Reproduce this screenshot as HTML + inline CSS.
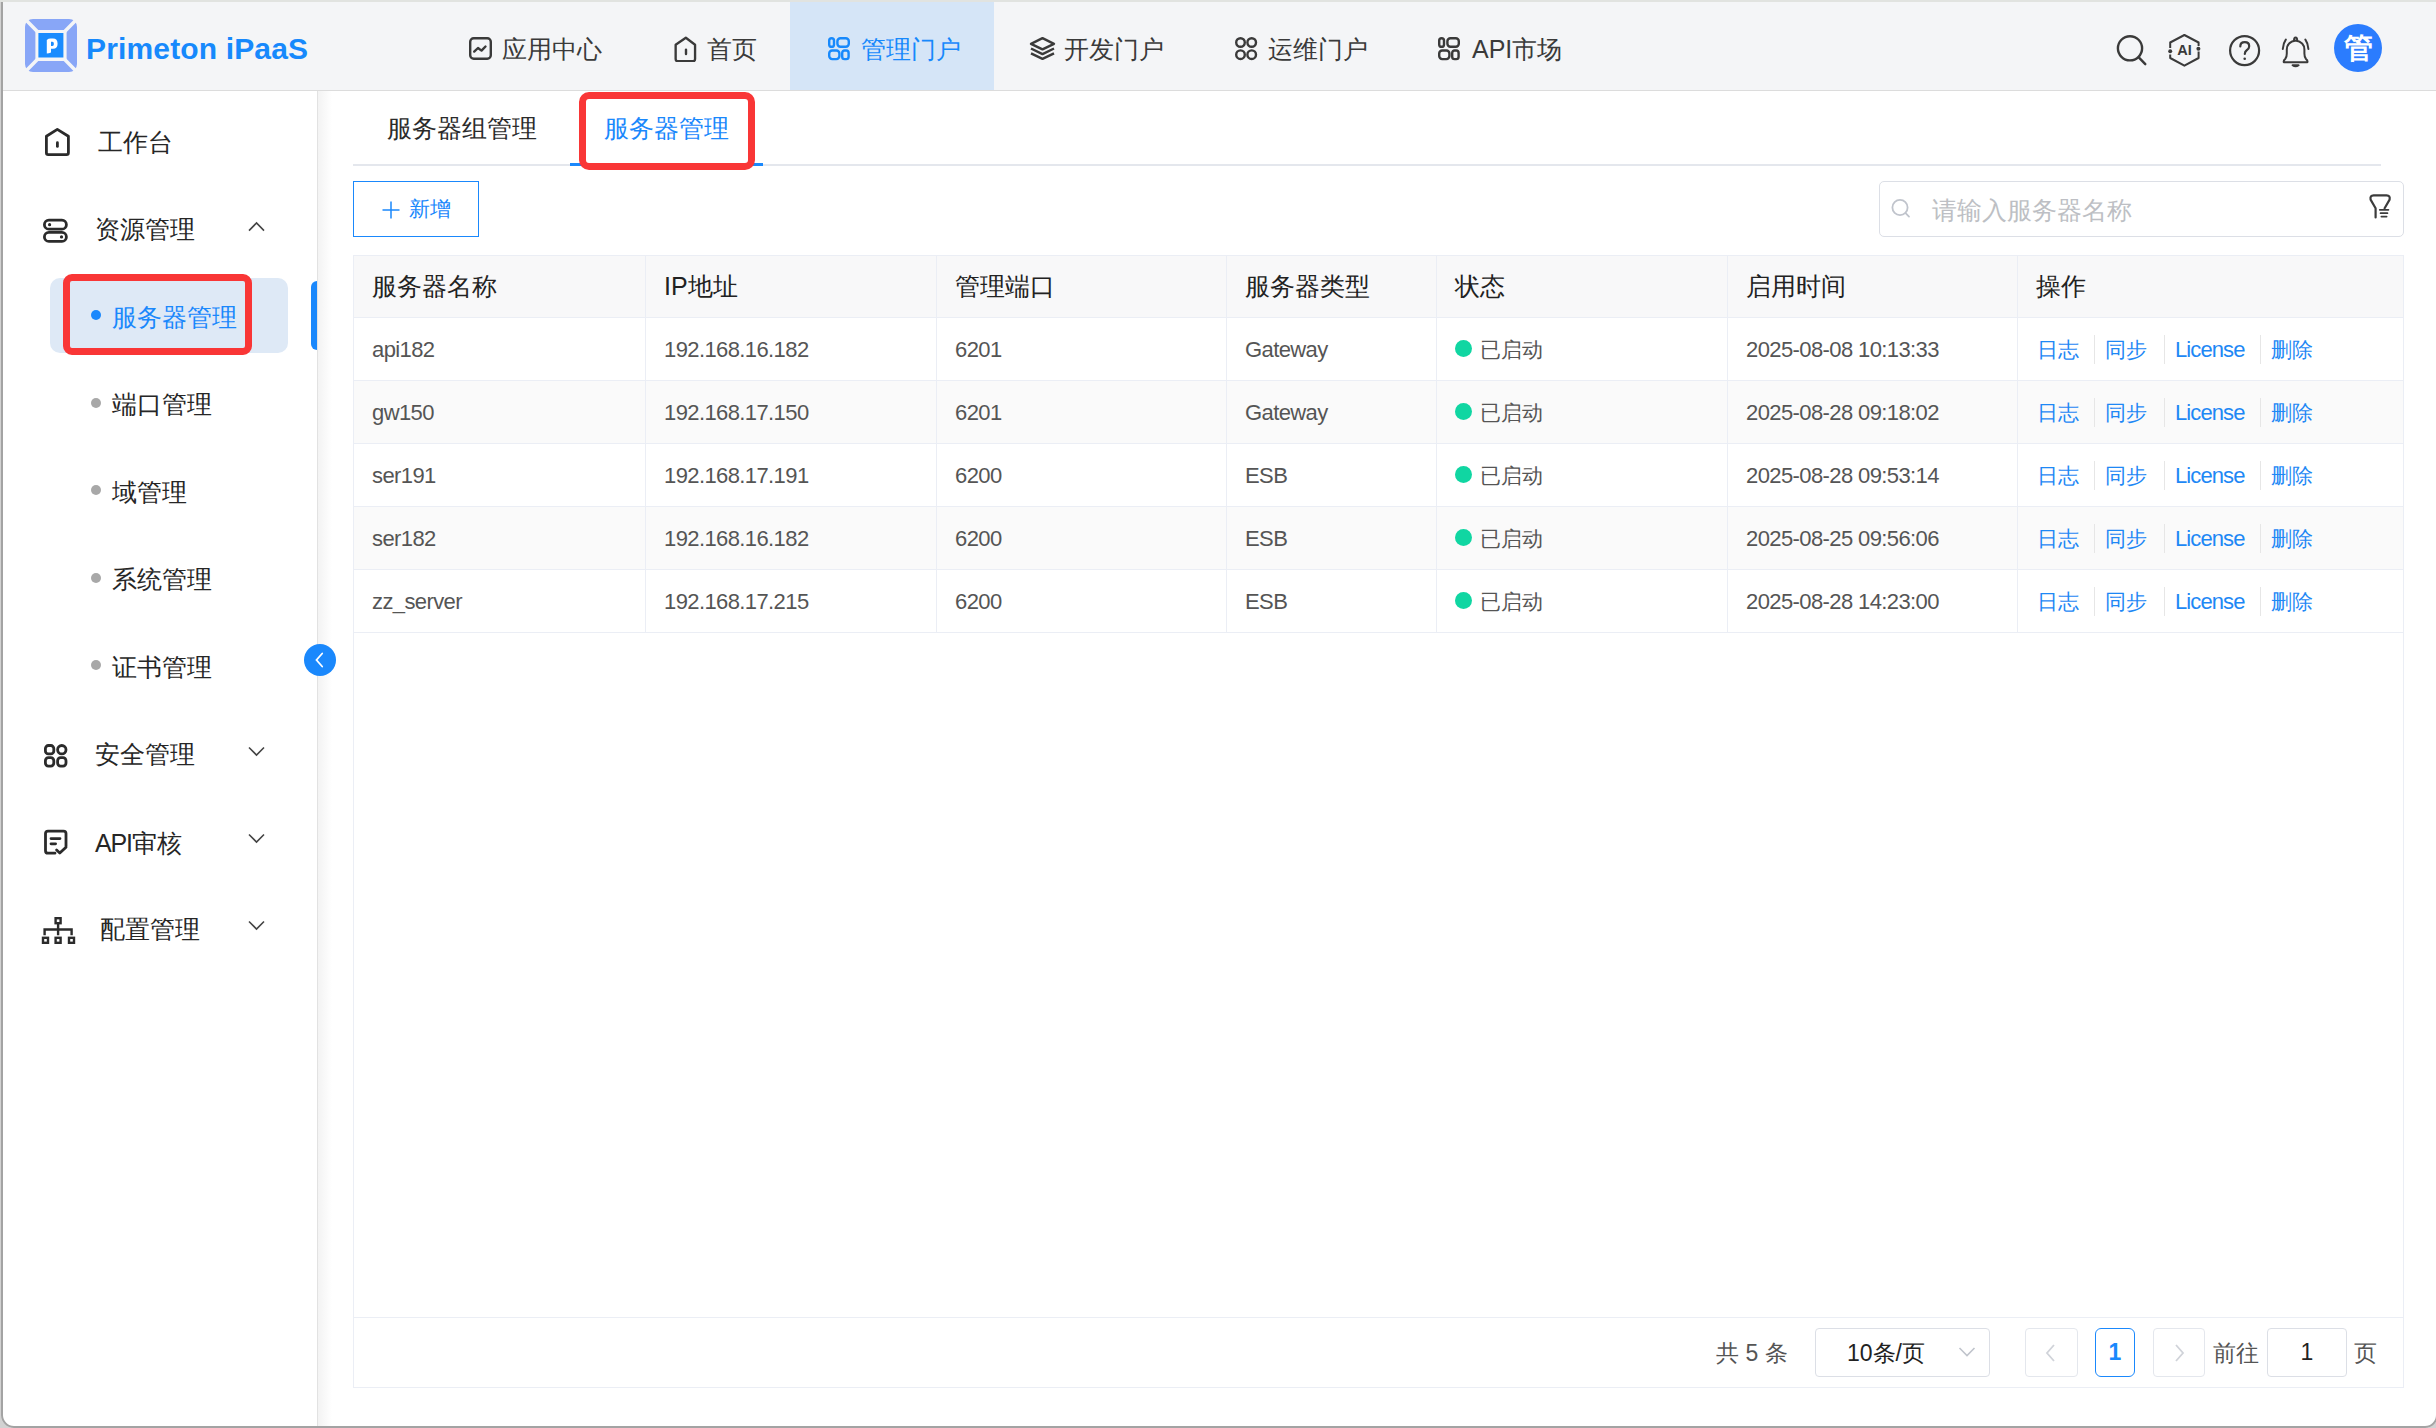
<!DOCTYPE html>
<html><head><meta charset="utf-8">
<style>
*{box-sizing:border-box;margin:0;padding:0}
html,body{width:2436px;height:1428px;overflow:hidden;background:#fff;font-family:"Liberation Sans",sans-serif;color:#303133}
.a{position:absolute}
#win{position:absolute;left:0;top:0;width:2436px;height:1428px;background:#fff}
#topb{position:absolute;left:0;top:0;width:2436px;height:2px;background:#e1e3e0}
#leftb{position:absolute;left:1px;top:0;width:2px;height:1428px;background:#acacac}
#botb{position:absolute;left:0;top:1426px;width:2436px;height:2px;background:#9a9a9a}
#hdr{position:absolute;left:3px;top:2px;width:2433px;height:89px;background:#f4f5f7;border-bottom:1px solid #dcdcdc}
.nav{position:absolute;top:0;height:88px;line-height:94px;font-size:25px;color:#3a3a3a;white-space:nowrap}
.nav svg{position:absolute}
#side{position:absolute;left:3px;top:91px;width:315px;height:1335px;background:#fff;border-right:1px solid #e2e2e2}
.mi{position:absolute;font-size:25px;color:#262626;white-space:nowrap;line-height:30px}
.si{position:absolute;font-size:25px;color:#262626;white-space:nowrap;line-height:30px}
.dot{position:absolute;width:9px;height:9px;border-radius:50%;background:#a8a8a8}
.chev{position:absolute}
.tbl{position:absolute;left:353px;top:255px;width:2051px;height:1063px;border:1px solid #ebeef5;border-right:none}
.row{position:absolute;left:0;width:2050px;height:63px;border-bottom:1px solid #ebeef5}
.cell{position:absolute;top:0;height:62px;line-height:64px;font-size:22px;color:#555;white-space:nowrap;padding-left:18px;letter-spacing:-0.6px}
.vl{position:absolute;top:0;width:1px;height:377px;background:#ebeef5}
.hd{font-size:25px;color:#222;line-height:61px;letter-spacing:0}
.lk{position:absolute;color:#1e88f5;font-size:22px;top:0;line-height:64px}
.sep{position:absolute;top:17px;width:1px;height:29px;background:#e6e6e6}
.gdot{display:inline-block;width:17px;height:17px;border-radius:50%;background:#10d6a2;vertical-align:middle;margin-right:8px;position:relative;top:-3px}
.tab{position:absolute;font-size:25px;line-height:30px;white-space:nowrap}
.pg{position:absolute;top:1338px;font-size:23px;line-height:30px;color:#555;white-space:nowrap}
.cn{font-size:21px;letter-spacing:0}
</style></head><body>
<div id="win">
<div id="hdr">
<svg class="a" style="left:22px;top:17px" width="52" height="53" viewBox="0 0 52 53">
<rect x="0" y="0" width="52" height="53" rx="8" fill="#88a6f7"/>
<path d="M-2 -2 L54 55 M54 -2 L-2 55" stroke="#f4f5f7" stroke-width="3.6"/>
<rect x="10.4" y="11" width="31.2" height="31" fill="#f4f5f7"/>
<rect x="13.4" y="14" width="25" height="24.5" fill="#1a8cfe"/>
<path d="M21.8 21 Q23.5 19.6 25.5 19.6 H28 Q32.6 19.6 32.6 24.8 Q32.6 29.8 28 29.8 H26 V33.6 Q24 34.6 21.8 34.6 Z M26 22.8 V27 H27.4 Q28.9 27 28.9 24.9 Q28.9 22.8 27.4 22.8 Z" fill="#fff"/>
</svg>
<div class="a" style="left:83px;top:27px;font-size:30px;letter-spacing:0.15px;font-weight:bold;color:#1789fc;line-height:40px;white-space:nowrap">Primeton iPaaS</div>
<div class="a" style="left:787px;top:0;width:204px;height:88px;background:#d5e5f7"></div>
<!-- nav 1 -->
<svg class="a" style="left:463px;top:34px" width="26" height="26" viewBox="0 0 26 26" fill="none" stroke="#3a3a3a" stroke-width="2.4" stroke-linejoin="round" stroke-linecap="round"><rect x="4.2" y="2.2" width="20.6" height="20.6" rx="3.5"/><path d="M8.2 15.6 L12 12 L15.5 14.6 L19.5 10.5"/></svg>
<div class="nav" style="left:499px">应用中心</div>
<svg class="a" style="left:667px;top:32px" width="28" height="28" viewBox="0 0 28 28" fill="none" stroke="#3a3a3a" stroke-width="2.4" stroke-linejoin="round" stroke-linecap="round"><path d="M7.2 10.8 L17.6 3.8 L27 10.8 V25 Q27 27.2 25 27.2 H9.2 Q7.2 27.2 7.2 25 Z" transform="translate(-1.4,0) scale(0.98,1)"/><path d="M16 15.8 V20" /></svg>
<div class="nav" style="left:704px">首页</div>
<svg class="a" style="left:822px;top:33px" width="28" height="28" viewBox="0 0 28 28" fill="none" stroke="#1789fc" stroke-width="2.4"><rect x="4.2" y="3.2" width="4.8" height="8.6" rx="2.4"/><rect x="12.4" y="3.2" width="11.4" height="8.6" rx="3"/><rect x="4.2" y="15.5" width="10.2" height="8.6" rx="3"/><rect x="17.2" y="15.5" width="6.4" height="8.6" rx="2.4"/></svg>
<div class="nav" style="left:858px;color:#1789fc">管理门户</div>
<svg class="a" style="left:1024px;top:33px" width="30" height="28" viewBox="0 0 30 28" fill="none" stroke="#3a3a3a" stroke-width="2.4" stroke-linejoin="round"><path d="M15.5 3.2 L27 8.8 L15.5 14.4 L4 8.8 Z"/><path d="M4 13.5 L15.5 19.1 L27 13.5"/><path d="M4 18.3 L15.5 23.9 L27 18.3"/></svg>
<div class="nav" style="left:1061px">开发门户</div>
<svg class="a" style="left:1229px;top:33px" width="28" height="28" viewBox="0 0 28 28" fill="none" stroke="#3a3a3a" stroke-width="2.4"><rect x="4.2" y="3.2" width="8.6" height="8.6" rx="4.3"/><rect x="15.4" y="3.2" width="8.6" height="8.6" rx="4.3"/><rect x="4.2" y="15.4" width="8.6" height="8.6" rx="4.3"/><rect x="15.4" y="15.4" width="8.6" height="8.6" rx="4.3"/></svg>
<div class="nav" style="left:1265px">运维门户</div>
<svg class="a" style="left:1432px;top:33px" width="28" height="28" viewBox="0 0 28 28" fill="none" stroke="#3a3a3a" stroke-width="2.4"><rect x="4.2" y="3.2" width="4.8" height="8.6" rx="2.4"/><rect x="12.4" y="3.2" width="11.4" height="8.6" rx="3"/><rect x="4.2" y="15.5" width="10.2" height="8.6" rx="3"/><rect x="17.2" y="15.5" width="6.4" height="8.6" rx="2.4"/></svg>
<div class="nav" style="left:1469px">API市场</div>
<!-- right icons -->
<svg class="a" style="left:2107px;top:26px" width="42" height="42" viewBox="0 0 42 42" fill="none" stroke="#3a3a3a" stroke-width="2.4" stroke-linecap="round"><circle cx="20" cy="20.3" r="12.1"/><path d="M29 29.6 L35.3 36.2"/></svg>
<svg class="a" style="left:2158px;top:26px" width="46" height="42" viewBox="0 0 46 42" fill="none" stroke="#3a3a3a" stroke-width="2" stroke-linejoin="round"><path d="M9.2 20 V14.5 L23.4 7 L37.6 14.5 V18 M37.6 23.5 V30 L23.4 37.7 L9.2 30 V26.5"/><circle cx="9.2" cy="23.2" r="2" fill="#3a3a3a" stroke="none"/><circle cx="37.4" cy="20.8" r="2" fill="#3a3a3a" stroke="none"/><text x="16.2" y="27.2" font-family="Liberation Sans" font-weight="bold" font-size="14.5" fill="#3a3a3a" stroke="none">AI</text></svg>
<svg class="a" style="left:2221px;top:26px" width="42" height="42" viewBox="0 0 42 42" fill="none" stroke="#3a3a3a" stroke-width="2.2" stroke-linecap="round"><circle cx="20.6" cy="22.6" r="14.5"/><path d="M16.3 18.4 Q16.3 14.2 20.8 14.2 Q25.2 14.2 25.2 18.2 Q25.2 20.6 22.7 22.2 Q20.8 23.4 20.8 26"/><circle cx="20.7" cy="30.8" r="1.3" fill="#3a3a3a" stroke="none"/></svg>
<svg class="a" style="left:2269px;top:26px" width="42" height="42" viewBox="0 0 42 42" fill="none" stroke="#3a3a3a" stroke-width="2" stroke-linecap="round" stroke-linejoin="round"><path d="M11.8 34.2 Q11.3 32.6 13.2 31 Q14.8 29.2 14.8 25.4 V21.6 Q14.8 14.4 23.6 12.6 Q32.4 14.4 32.4 21.6 V25.4 Q32.4 29.2 34 31 Q35.9 32.6 35.4 34.2 Z"/><path d="M22 12.6 Q22 9.6 23.6 9.6 Q25.2 9.6 25.2 12.6"/><path d="M20.6 37.2 Q23.6 39.2 26.6 37.2 Z" fill="#3a3a3a"/><path d="M10.8 21 Q11.3 15 13.8 11.6 M36.4 21 Q35.9 15 33.4 11.6"/></svg>
<div class="a" style="left:2331px;top:22px;width:48px;height:48px;border-radius:50%;background:#2b7cfe;color:#fff;font-size:29px;font-weight:bold;text-align:center;line-height:48px">管</div>
</div>
<div id="side"></div>
<svg class="a" style="left:42px;top:126px" width="30" height="32" viewBox="0 0 30 32" fill="none" stroke="#2b2b2b" stroke-width="2.8" stroke-linejoin="round" stroke-linecap="round"><path d="M4.4 10.2 L15.3 3.4 L26.4 10.2 V26.8 Q26.4 28.6 24.6 28.6 H6.2 Q4.4 28.6 4.4 26.8 Z"/><path d="M15.4 16.7 V20.4"/></svg>
<div class="mi" style="left:98px;top:127px">工作台</div>
<svg class="a" style="left:40px;top:216px" width="32" height="30" viewBox="0 0 32 30" fill="none" stroke="#2b2b2b" stroke-width="2.8" stroke-linejoin="round" stroke-linecap="round"><rect x="4.4" y="4.2" width="22" height="9" rx="4.5"/><rect x="4.4" y="16.4" width="22" height="9" rx="4.5"/><circle cx="9.6" cy="8.7" r="0.9" fill="#2b2b2b" stroke-width="1.4"/><circle cx="21.5" cy="20.9" r="0.9" fill="#2b2b2b" stroke-width="1.4"/></svg>
<div class="mi" style="left:95px;top:214px">资源管理</div>
<svg class="a" style="left:246px;top:219px" width="22" height="14" viewBox="0 0 22 14" fill="none" stroke="#444" stroke-width="1.6"><path d="M3 11.6 L10.5 4 L18 11.6"/></svg>
<div class="a" style="left:50px;top:278px;width:238px;height:75px;border-radius:10px;background:#dee9f6"></div>
<div class="a" style="left:311px;top:281px;width:6px;height:69px;border-radius:6px 0 0 6px;background:#1a88fc"></div>
<div class="dot" style="left:91px;top:310px;background:#1a88fc;width:10px;height:10px"></div>
<div class="si" style="left:112px;top:302px;color:#1a88fc">服务器管理</div>
<div class="a" style="left:63px;top:274px;width:189px;height:81px;border:7px solid #f93636;border-radius:9px"></div>
<div class="dot" style="left:91px;top:398px;width:10px;height:10px"></div>
<div class="si" style="left:112px;top:389px">端口管理</div>
<div class="dot" style="left:91px;top:485px;width:10px;height:10px"></div>
<div class="si" style="left:112px;top:477px">域管理</div>
<div class="dot" style="left:91px;top:573px;width:10px;height:10px"></div>
<div class="si" style="left:112px;top:564px">系统管理</div>
<div class="dot" style="left:91px;top:660px;width:10px;height:10px"></div>
<div class="si" style="left:112px;top:652px">证书管理</div>
<svg class="a" style="left:42px;top:742px" width="28" height="28" viewBox="0 0 28 28" fill="none" stroke="#2b2b2b" stroke-width="2.8" stroke-linejoin="round" stroke-linecap="round"><rect x="3.4" y="3.5" width="8.4" height="8.4" rx="3"/><rect x="15.6" y="3.5" width="8.4" height="8.4" rx="4.2"/><rect x="3.4" y="15.7" width="8.4" height="8.4" rx="3"/><rect x="15.6" y="15.7" width="8.4" height="8.4" rx="3"/></svg>
<div class="mi" style="left:95px;top:739px">安全管理</div>
<svg class="a" style="left:246px;top:744px" width="22" height="14" viewBox="0 0 22 14" fill="none" stroke="#444" stroke-width="1.6"><path d="M3 3.5 L10.5 11 L18 3.5"/></svg>
<svg class="a" style="left:42px;top:828px" width="28" height="30" viewBox="0 0 28 30" fill="none" stroke="#2b2b2b" stroke-width="2.8" stroke-linejoin="round" stroke-linecap="round"><path d="M13 25.2 H6 Q3.5 25.2 3.5 22.7 V5.6 Q3.5 3.1 6 3.1 H21.5 Q24 3.1 24 5.6 V18"/><path d="M9 10.6 H18 M9 15.8 H13.6"/><path d="M14.6 22 L17.8 25 L24 19.2"/></svg>
<div class="mi" style="left:95px;top:828px"><span style="letter-spacing:-1.2px">API</span>审核</div>
<svg class="a" style="left:246px;top:831px" width="22" height="14" viewBox="0 0 22 14" fill="none" stroke="#444" stroke-width="1.6"><path d="M3 3.5 L10.5 11 L18 3.5"/></svg>
<svg class="a" style="left:40px;top:915px" width="36" height="32" viewBox="0 0 36 32" fill="none" stroke="#2b2b2b" stroke-width="2.4"><rect x="15.6" y="3.2" width="5" height="5"/><path d="M18.1 8.2 V14.5 M4.6 20.3 V14.5 H31.6 V20.3 M18.1 14.5 V20.3"/><rect x="3" y="22.8" width="5" height="5"/><rect x="15.6" y="22.8" width="5" height="5"/><rect x="29" y="22.8" width="5" height="5"/></svg>
<div class="mi" style="left:100px;top:914px">配置管理</div>
<svg class="a" style="left:246px;top:918px" width="22" height="14" viewBox="0 0 22 14" fill="none" stroke="#444" stroke-width="1.6"><path d="M3 3.5 L10.5 11 L18 3.5"/></svg>


<div id="main">
<div class="a" style="left:318px;top:91px;width:14px;height:1335px;background:linear-gradient(to right,#f3f3f3,#fff)"></div>
<div class="tab" style="left:387px;top:113px;color:#2b2b2b">服务器组管理</div>
<div class="tab" style="left:604px;top:113px;color:#1a88fc">服务器管理</div>
<div class="a" style="left:353px;top:164px;width:2028px;height:2px;background:#e4e7ed"></div>
<div class="a" style="left:570px;top:163px;width:193px;height:3px;background:#1a88fc"></div>
<div class="a" style="left:579px;top:92px;width:176px;height:78px;border:7px solid #f93636;border-radius:10px"></div>
<div class="a" style="left:353px;top:181px;width:126px;height:56px;border:1.5px solid #1a88fc;color:#1a88fc;font-size:21px;line-height:54px;white-space:nowrap">
<svg class="a" style="left:27px;top:18px" width="20" height="20" viewBox="0 0 20 20" stroke="#1a88fc" stroke-width="1.5"><path d="M10 1.5 V18.5 M1.5 10 H18.5"/></svg>
<span class="a" style="left:55px;top:0">新增</span></div>
<div class="a" style="left:1879px;top:181px;width:525px;height:56px;border:1px solid #dcdfe6;border-radius:5px"></div>
<svg class="a" style="left:1889px;top:197px" width="24" height="24" viewBox="0 0 24 24" fill="none" stroke="#c0c4cc" stroke-width="1.8" stroke-linecap="round"><circle cx="11" cy="10.5" r="7.6"/><path d="M16.6 16.2 L20 19.6"/></svg>
<div class="a" style="left:1932px;top:195px;font-size:25px;line-height:30px;color:#bdbfc4;white-space:nowrap">请输入服务器名称</div>
<svg class="a" style="left:2366px;top:192px" width="28" height="30" viewBox="0 0 28 30" fill="none" stroke="#3c3c3c" stroke-width="2.2" stroke-linecap="round" stroke-linejoin="round"><path d="M9.6 25.4 V16.2 L4.6 7.6 Q3.8 3.4 7.6 3.4 H20.6 Q24.4 3.4 23.6 7.6 L18.6 16.2"/><path d="M13.8 17.8 H22.4 M14.6 21.2 H21.4 M15.4 24.6 H20.6" stroke-width="1.8"/></svg>
<div class="tbl">
<div class="row" style="top:0;height:62px;background:#f8f8f9"><div class="cell hd" style="left:0px">服务器名称</div><div class="cell hd" style="left:292px">IP地址</div><div class="cell hd" style="left:583px">管理端口</div><div class="cell hd" style="left:873px">服务器类型</div><div class="cell hd" style="left:1083px">状态</div><div class="cell hd" style="left:1374px">启用时间</div><div class="cell hd" style="left:1664px">操作</div></div>
<div class="row" style="top:62px;background:#fff"><div class="cell" style="left:0px">api182</div><div class="cell" style="left:292px">192.168.16.182</div><div class="cell" style="left:583px">6201</div><div class="cell" style="left:873px">Gateway</div><div class="cell cn" style="left:1083px"><span class="gdot"></span>已启动</div><div class="cell" style="left:1374px">2025-08-08 10:13:33</div><div class="lk cn" style="left:1683px">日志</div><div class="sep" style="left:1740px"></div><div class="lk cn" style="left:1751px">同步</div><div class="sep" style="left:1810px"></div><div class="lk" style="letter-spacing:-0.9px;left:1821px">License</div><div class="sep" style="left:1906px"></div><div class="lk cn" style="left:1917px">删除</div></div>
<div class="row" style="top:125px;background:#fafafa"><div class="cell" style="left:0px">gw150</div><div class="cell" style="left:292px">192.168.17.150</div><div class="cell" style="left:583px">6201</div><div class="cell" style="left:873px">Gateway</div><div class="cell cn" style="left:1083px"><span class="gdot"></span>已启动</div><div class="cell" style="left:1374px">2025-08-28 09:18:02</div><div class="lk cn" style="left:1683px">日志</div><div class="sep" style="left:1740px"></div><div class="lk cn" style="left:1751px">同步</div><div class="sep" style="left:1810px"></div><div class="lk" style="letter-spacing:-0.9px;left:1821px">License</div><div class="sep" style="left:1906px"></div><div class="lk cn" style="left:1917px">删除</div></div>
<div class="row" style="top:188px;background:#fff"><div class="cell" style="left:0px">ser191</div><div class="cell" style="left:292px">192.168.17.191</div><div class="cell" style="left:583px">6200</div><div class="cell" style="left:873px">ESB</div><div class="cell cn" style="left:1083px"><span class="gdot"></span>已启动</div><div class="cell" style="left:1374px">2025-08-28 09:53:14</div><div class="lk cn" style="left:1683px">日志</div><div class="sep" style="left:1740px"></div><div class="lk cn" style="left:1751px">同步</div><div class="sep" style="left:1810px"></div><div class="lk" style="letter-spacing:-0.9px;left:1821px">License</div><div class="sep" style="left:1906px"></div><div class="lk cn" style="left:1917px">删除</div></div>
<div class="row" style="top:251px;background:#fafafa"><div class="cell" style="left:0px">ser182</div><div class="cell" style="left:292px">192.168.16.182</div><div class="cell" style="left:583px">6200</div><div class="cell" style="left:873px">ESB</div><div class="cell cn" style="left:1083px"><span class="gdot"></span>已启动</div><div class="cell" style="left:1374px">2025-08-25 09:56:06</div><div class="lk cn" style="left:1683px">日志</div><div class="sep" style="left:1740px"></div><div class="lk cn" style="left:1751px">同步</div><div class="sep" style="left:1810px"></div><div class="lk" style="letter-spacing:-0.9px;left:1821px">License</div><div class="sep" style="left:1906px"></div><div class="lk cn" style="left:1917px">删除</div></div>
<div class="row" style="top:314px;background:#fff"><div class="cell" style="left:0px">zz_server</div><div class="cell" style="left:292px">192.168.17.215</div><div class="cell" style="left:583px">6200</div><div class="cell" style="left:873px">ESB</div><div class="cell cn" style="left:1083px"><span class="gdot"></span>已启动</div><div class="cell" style="left:1374px">2025-08-28 14:23:00</div><div class="lk cn" style="left:1683px">日志</div><div class="sep" style="left:1740px"></div><div class="lk cn" style="left:1751px">同步</div><div class="sep" style="left:1810px"></div><div class="lk" style="letter-spacing:-0.9px;left:1821px">License</div><div class="sep" style="left:1906px"></div><div class="lk cn" style="left:1917px">删除</div></div>
<div class="vl" style="left:291px"></div><div class="vl" style="left:582px"></div><div class="vl" style="left:872px"></div><div class="vl" style="left:1082px"></div><div class="vl" style="left:1373px"></div><div class="vl" style="left:1663px"></div>
<div class="a" style="left:-1px;top:1061px;width:2051px;height:1px;background:#ebeef5"></div>
</div>
<div class="a" style="left:353px;top:1317px;width:2051px;height:71px;border:1px solid #ebeef5;border-top:none"></div>
<div class="a" style="left:2403px;top:255px;width:1px;height:1133px;background:#ebeef5"></div>
<div class="pg" style="left:1716px">共 5 条</div>
<div class="a" style="left:1815px;top:1328px;width:175px;height:49px;border:1px solid #dcdfe6;border-radius:4px"></div>
<div class="pg" style="left:1847px;color:#222">10条/页</div>
<svg class="a" style="left:1956px;top:1344px" width="22" height="18" viewBox="0 0 22 18" fill="none" stroke="#c0c4cc" stroke-width="1.6"><path d="M3.5 4 L11 11.5 L18.5 4"/></svg>
<div class="a" style="left:2025px;top:1328px;width:53px;height:49px;border:1px solid #e4e7ed;border-radius:4px"></div>
<svg class="a" style="left:2040px;top:1340px" width="22" height="26" viewBox="0 0 22 26" fill="none" stroke="#d0d3d9" stroke-width="1.8"><path d="M14 5 L7 13 L14 21"/></svg>
<div class="a" style="left:2095px;top:1328px;width:40px;height:49px;border:1.5px solid #1a88fc;border-radius:6px;color:#1a88fc;font-weight:bold;font-size:23px;text-align:center;line-height:47px">1</div>
<div class="a" style="left:2153px;top:1328px;width:52px;height:49px;border:1px solid #e4e7ed;border-radius:4px"></div>
<svg class="a" style="left:2168px;top:1340px" width="22" height="26" viewBox="0 0 22 26" fill="none" stroke="#d0d3d9" stroke-width="1.8"><path d="M8 5 L15 13 L8 21"/></svg>
<div class="pg" style="left:2213px">前往</div>
<div class="a" style="left:2267px;top:1328px;width:80px;height:49px;border:1px solid #dcdfe6;border-radius:4px;text-align:center;font-size:23px;line-height:47px;color:#222">1</div>
<div class="pg" style="left:2354px">页</div>
</div>
<div class="a" style="left:304px;top:644px;width:32px;height:32px;border-radius:50%;background:#1a88fc"></div>
<svg class="a" style="left:304px;top:644px" width="32" height="32" viewBox="0 0 32 32" fill="none" stroke="#fff" stroke-width="1.8" stroke-linecap="round"><path d="M18.2 9.5 L12.5 16 L18.2 22.5"/></svg>
<div class="a" style="left:1px;top:-20px;width:2437px;height:1448px;border:2px solid #a3a3a3;border-radius:13px;box-shadow:0 0 0 30px #d2d2d2;pointer-events:none"></div>
<div id="topb"></div>
</div>
</body></html>
